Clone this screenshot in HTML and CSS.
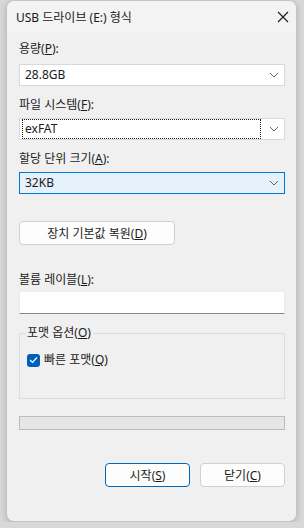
FILE: index.html
```html
<!DOCTYPE html>
<html lang="ko">
<head>
    <meta charset="UTF-8">
    <meta name="viewport" content="width=device-width, initial-scale=1.0">
    <title>USB 드라이브 (E:) 형식</title>
    <link rel="stylesheet" href="styles.css">
</head>
<body>

    <div class="window">

        <div class="title-bar">
            <span class="title">USB 드라이브 (E:) 형식</span>
            <svg class="close" width="12" height="12" viewBox="0 0 12 12">
                <path d="M1 1 L11 11 M11 1 L1 11" stroke="#1a1a1a" stroke-width="1.1" fill="none"/>
            </svg>
        </div>

        <div class="content">

            <div class="label label-first">용량(<u>P</u>):</div>
            <div class="combo combo-first">
                <span class="combo-text">28.8GB</span>
                <svg class="chevron" width="10" height="6" viewBox="0 0 10 6"><path d="M1 1 L5 5 L9 1" stroke="#606060" fill="none"/></svg>
            </div>

            <div class="label">파일 시스템(<u>F</u>):</div>
            <div class="combo">
                <span class="combo-text focus">exFAT</span>
                <svg class="chevron" width="10" height="6" viewBox="0 0 10 6"><path d="M1 1 L5 5 L9 1" stroke="#606060" fill="none"/></svg>
            </div>

            <div class="label">할당 단위 크기(<u>A</u>):</div>
            <div class="combo combo-active">
                <span class="combo-text">32KB</span>
                <svg class="chevron" width="10" height="6" viewBox="0 0 10 6"><path d="M1 1 L5 5 L9 1" stroke="#606060" fill="none"/></svg>
            </div>

            <button class="btn btn-restore">장치 기본값 복원(<u>D</u>)</button>

            <div class="label label-volume">볼륨 레이블(<u>L</u>):</div>
            <div class="text-input"></div>

            <div class="group">
                <span class="legend">포맷 옵션(<u>O</u>)</span>
                <label class="check-row">
                    <span class="checkbox">
                        <svg width="9" height="8" viewBox="0 0 9 8"><path d="M1 4 L3.5 6.5 L8 1.5" stroke="#fff" stroke-width="1.2" fill="none"/></svg>
                    </span>
                    <span>빠른 포맷(<u>Q</u>)</span>
                </label>
            </div>

            <div class="progress"></div>

            <div class="actions">
                <button class="btn btn-action btn-default">시작(<u>S</u>)</button>
                <button class="btn btn-action">닫기(<u>C</u>)</button>
            </div>

        </div>
    </div>

</body>
</html>
```

FILE: styles.css
```css
*{
    box-sizing: border-box;
}

body{
    margin: 0;
    background-color: #d8d8d8;
    font-family: "Noto Sans", "Noto Sans CJK KR", sans-serif;
    font-size: 12px;
    color: #1b1b1b;
}

.window{
    margin: 0 7px 0 6px;
    height: 522px;
    background-color: #f0f0f0;
    border: 1px solid #c4c4c4;
    border-radius: 8px;
    box-shadow: 0 2px 6px rgba(0, 0, 0, 0.18);
    display: flex;
    flex-direction: column;
}

.title-bar{
    height: 31px;
    display: flex;
    align-items: center;
    justify-content: space-between;
    padding: 0 7px 0 9px;
    background-color: #f3f3f3;
    border-radius: 8px 8px 0 0;
}

.title{
    font-size: 12px;
    color: #1a1a1a;
}

.content{
    padding: 0 11px 0 12px;
    display: flex;
    flex-direction: column;
}

.label{
    height: 16px;
    line-height: 16px;
    margin-top: 11px;
}

.label-first{
    margin-top: 9px;
}

.combo{
    height: 22px;
    margin-top: 5px;
    background-color: #fff;
    border: 1px solid #d9d9d9;
    display: flex;
    align-items: center;
    justify-content: space-between;
    padding: 0 5px 0 2px;
}

.combo-first{
    margin-top: 7px;
}

.combo-text{
    padding: 0 2px;
    line-height: 18px;
    border: 1px solid transparent;
}

.combo-text.focus{
    flex: 1;
    margin-right: 8px;
    border: 1px dotted #1b1b1b;
}

.combo-active{
    background-color: #e5f1fb;
    border-color: #0078d4;
}

.chevron{
    flex-shrink: 0;
}

.btn{
    font-family: inherit;
    font-size: 12px;
    color: #1b1b1b;
    background-color: #fdfdfd;
    border: 1px solid #d0d0d0;
    border-radius: 4px;
    height: 24px;
    padding: 0;
}

.btn-restore{
    width: 156px;
    margin-top: 27px;
}

.label-volume{
    margin-top: 27px;
}

.text-input{
    height: 23px;
    margin-top: 3px;
    background-color: #fff;
    border: 1px solid #ececec;
    border-bottom-color: #8a8a8a;
    border-radius: 3px 3px 0 0;
}

.group{
    position: relative;
    margin-top: 19px;
    height: 66px;
    border: 1px solid #dcdcdc;
    padding: 18px 7px 0;
}

.legend{
    position: absolute;
    top: -9px;
    left: 6px;
    padding: 0 2px 0 1px;
    background-color: #f0f0f0;
    line-height: 16px;
}

.check-row{
    display: flex;
    align-items: center;
    gap: 4px;
    line-height: 16px;
}

.checkbox{
    width: 13px;
    height: 13px;
    border-radius: 3px;
    background-color: #005fb8;
    display: flex;
    align-items: center;
    justify-content: center;
}

.progress{
    height: 14px;
    margin-top: 17px;
    background-color: #e6e6e6;
    border: 1px solid #bcbcbc;
}

.actions{
    display: flex;
    justify-content: flex-end;
    gap: 10px;
    margin-top: 33px;
}

.btn-action{
    width: 85px;
}

.btn-default{
    border-color: #0067c0;
}
```
